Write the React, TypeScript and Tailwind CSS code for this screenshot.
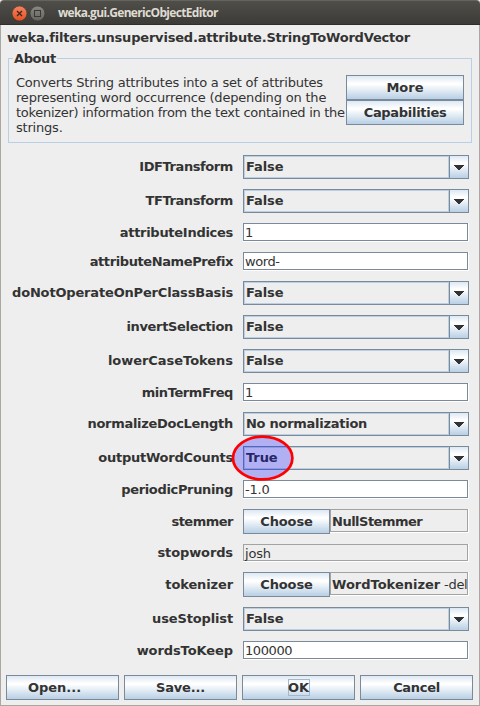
import React from 'react';

const GRADIENT = 'bg-[linear-gradient(180deg,#dde8f3_0%,#ffffff_32%,#ffffff_36%,#b8cfe5_100%)]';

function Button({ children, className = '' }: { children: React.ReactNode; className?: string }) {
  return (
    <button
      className={`flex shrink-0 items-center justify-center border border-[#7a8a99] font-bold ${GRADIENT} ${className}`}
    >
      {children}
    </button>
  );
}

function Combo({ value, tracking = 'tracking-[-0.1px]' }: { value: string; tracking?: string }) {
  return (
    <div className="flex h-6 w-[226px] border border-[#7a8a99] font-bold">
      <div className={`flex flex-1 items-center border border-[#b8cfe5] pb-px pl-px ${tracking}`}>{value}</div>
      <div className={`flex w-[19px] items-center justify-center border-l border-[#7a8a99] ${GRADIENT}`}>
        <svg width="10" height="5" viewBox="0 0 10 5" className="mt-px" shapeRendering="crispEdges">
          <path d="M0 0h10v1H9v1H8v1H7v1H6v1H4V4H3V3H2V2H1V1H0z" fill="#333333" />
        </svg>
      </div>
    </div>
  );
}

function Field({
  value,
  disabled = false,
  tracking = '',
}: {
  value: string;
  disabled?: boolean;
  tracking?: string;
}) {
  return (
    <div className={`w-[226px] border-r border-b border-white ${disabled ? 'h-[18px]' : 'h-[19px]'}`}>
      <div
        className={`flex h-full items-center border pl-px ${tracking} ${
          disabled ? 'border-[#a3a3a3] bg-[#eeeeee] pt-px' : 'border-[#7a8a99] bg-white'
        }`}
      >
        {value}
      </div>
    </div>
  );
}

function Chooser({ name, options, tracking = '' }: { name: string; options?: string; tracking?: string }) {
  return (
    <div className="flex h-[25px] w-[226px] items-start">
      <Button className="h-[25px] w-[87px] tracking-[-0.1px]">Choose</Button>
      <div className="h-6 min-w-0 flex-1 border-r border-b border-white">
        <div className="flex h-full items-center border border-[#a3a3a3] pt-px pl-px whitespace-pre">
          <b className={tracking}>{name}</b>
          <span className="tracking-[-0.3px]">{options}</span>
        </div>
      </div>
    </div>
  );
}

const rows: [string, string, React.ReactNode][] = [
  ['IDFTransform', 'tracking-[-0.41px]', <Combo value="False" />],
  ['TFTransform', 'tracking-[-0.4px]', <Combo value="False" />],
  ['attributeIndices', 'tracking-[-0.28px]', <Field value="1" />],
  ['attributeNamePrefix', 'tracking-[-0.4px]', <Field value="word-" tracking="tracking-[-0.4px]" />],
  ['doNotOperateOnPerClassBasis', 'tracking-[-0.17px]', <Combo value="False" />],
  ['invertSelection', 'tracking-[-0.34px]', <Combo value="False" />],
  ['lowerCaseTokens', 'tracking-[-0.04px]', <Combo value="False" />],
  ['minTermFreq', 'tracking-[-0.4px]', <Field value="1" />],
  ['normalizeDocLength', 'tracking-[-0.29px]', <Combo value="No normalization" tracking="tracking-[-0.27px]" />],
  ['outputWordCounts', 'tracking-[-0.24px]', <Combo value="True" />],
  ['periodicPruning', 'tracking-[-0.34px]', <Field value="-1.0" tracking="tracking-[-0.2px]" />],
  ['stemmer', 'tracking-[-0.5px]', <Chooser name="NullStemmer" tracking="tracking-[-0.5px]" />],
  ['stopwords', 'tracking-[-0.12px]', <Field value="josh" disabled tracking="tracking-[-0.2px]" />],
  ['tokenizer', 'tracking-[-0.12px]', <Chooser name="WordTokenizer" options=" -del" />],
  ['useStoplist', 'tracking-[-0.14px]', <Combo value="False" />],
  ['wordsToKeep', 'tracking-[-0.08px]', <Field value="100000" tracking="tracking-[-0.4px]" />],
];

export default function App() {
  return (
    <div className="relative flex h-[706px] w-[480px] flex-col overflow-hidden bg-[#eeeeee] font-['DejaVu_Sans',sans-serif] text-[13px] leading-[15px] text-[#333333]">
      <header className="flex h-[25px] shrink-0 items-center rounded-t-[4px] border-t border-b border-t-[#65635d] border-b-[#2f2e2a] bg-gradient-to-b from-[#504e49] to-[#3c3b37] pl-3">
        <svg width="34" height="16" viewBox="0 0 34 16" className="mt-[2px]">
          <defs>
            <linearGradient id="close" x1="0" y1="0" x2="0" y2="1">
              <stop offset="0" stopColor="#f58462" />
              <stop offset="1" stopColor="#e2501f" />
            </linearGradient>
            <linearGradient id="max" x1="0" y1="0" x2="0" y2="1">
              <stop offset="0" stopColor="#8a8880" />
              <stop offset="1" stopColor="#65645d" />
            </linearGradient>
          </defs>
          <circle cx="7.5" cy="7.5" r="7.4" fill="url(#close)" stroke="#33322e" strokeWidth=".5" />
          <path d="M5 5l5 5M10 5l-5 5" stroke="#43271d" strokeWidth="1.4" />
          <circle cx="25.5" cy="7.5" r="7.4" fill="url(#max)" stroke="#33322e" strokeWidth=".5" />
          <rect x="22.5" y="4.5" width="6" height="6" fill="none" stroke="#3a3935" />
        </svg>
        <span className="ml-3 font-['Open_Sans',sans-serif] text-[12px] font-bold tracking-[-0.67px] text-[#dfdbd2]">
          weka.gui.GenericObjectEditor
        </span>
      </header>
      <main className="flex flex-1 flex-col border-r border-b border-l border-[#aaa6a1]">
        <h1 className="mt-[5px] ml-[6px] font-bold tracking-[-0.19px] whitespace-nowrap">
          weka.filters.unsupervised.attribute.StringToWordVector
        </h1>
        <fieldset className="mt-[6px] ml-[7px] flex h-[92px] w-[464px] min-w-0 shrink-0 flex-col border border-[#b8cfe5] px-[7px]">
          <legend className="-ml-[3px] px-px font-bold tracking-[-0.4px]">About</legend>
          <div className="mt-[9px] flex">
            <div className="w-[330px] whitespace-nowrap">
              <p className="tracking-[-0.22px]">Converts String attributes into a set of attributes</p>
              <p className="tracking-[-0.19px]">representing word occurrence (depending on the</p>
              <p className="tracking-[-0.29px]">tokenizer) information from the text contained in the</p>
              <p className="tracking-[-0.2px]">strings.</p>
            </div>
            <div className="flex w-[118px] shrink-0 flex-col">
              <Button className="h-[25px]">More</Button>
              <Button className="h-[25px] tracking-[-0.3px]">Capabilities</Button>
            </div>
          </div>
        </fieldset>
        <div className="mt-3 flex flex-col gap-[10px]">
          {rows.map(([label, tracking, control]) => (
            <div key={label} className="flex items-center">
              <label className={`w-[232px] pb-px text-right font-bold whitespace-nowrap ${tracking}`}>{label}</label>
              <div className="ml-[10px]">{control}</div>
            </div>
          ))}
        </div>
        <footer className="mt-[15px] ml-[5px] flex gap-[5px]">
          <Button className="h-[25px] w-[113px] pr-4">Open...</Button>
          <Button className="h-[25px] w-[113px] tracking-[-0.2px]">Save...</Button>
          <Button className="h-[25px] w-[113px]">
            <span className="flex h-[17px] w-[22px] items-center justify-center border border-[#a3b8cc]">OK</span>
          </Button>
          <Button className="h-[25px] w-[113px] tracking-[-0.3px]">Cancel</Button>
        </footer>
      </main>
      <svg className="absolute top-[434px] left-[230px]" width="66" height="48" viewBox="0 0 66 48">
        <ellipse cx="32.7" cy="24" rx="29.7" ry="21.4" fill="#0000ff" fillOpacity=".26" stroke="#ff0000" strokeWidth="2.7" />
      </svg>
    </div>
  );
}
